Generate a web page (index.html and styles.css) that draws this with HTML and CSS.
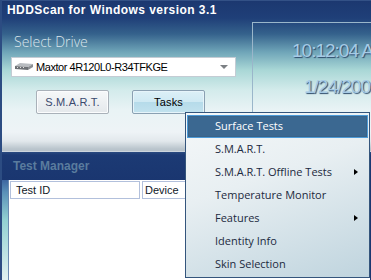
FILE: index.html
```html
<!DOCTYPE html>
<html>
<head>
<meta charset="utf-8">
<link rel="stylesheet" href="styles.css">
</head>
<body>
<div class="app">
  <div class="titlebar">HDDScan for Windows version 3.1</div>
  <div class="top">
    <div class="drive-panel">
      <div class="label">Select Drive</div>
      <div class="combo">
        <svg class="hdd" width="20" height="10" viewBox="0 0 20 10">
          <polygon points="1,4 6,1 19,2 14,5" fill="#b8bcc0"/>
          <polygon points="1,4 14,5 14,8 1,7" fill="#6c7074"/>
          <polygon points="14,5 19,2 19,5 14,8" fill="#8a8e92"/>
          <rect x="3" y="5" width="1" height="1" fill="#e0e0e0"/>
          <rect x="6" y="5" width="1" height="1" fill="#e0e0e0"/>
          <rect x="9" y="5" width="1" height="1" fill="#e0e0e0"/>
        </svg>
        <span class="drive-name">Maxtor 4R120L0-R34TFKGE</span>
        <span class="arrow"></span>
      </div>
      <div class="buttons">
        <div class="btn">S.M.A.R.T.</div>
        <div class="btn hot">Tasks</div>
      </div>
    </div>
    <div class="clock">
      <div class="time">10:12:04 AM</div>
      <div class="date">1/24/2009</div>
    </div>
  </div>
  <div class="manager">
    <div class="mgr-head">Test Manager</div>
    <div class="mgr-body">
      <div class="strip"></div>
      <div class="list">
        <div class="cols">
          <div class="col c1">Test ID</div>
          <div class="col c2">Device</div>
        </div>
      </div>
    </div>
  </div>
  <div class="menu">
    <div class="item active">Surface Tests</div>
    <div class="item">S.M.A.R.T.</div>
    <div class="item sub">S.M.A.R.T. Offline Tests</div>
    <div class="item">Temperature Monitor</div>
    <div class="item sub">Features</div>
    <div class="item">Identity Info</div>
    <div class="item">Skin Selection</div>
  </div>
</div>
</body>
</html>
```

FILE: styles.css
```css
html, body {
  margin: 0;
  padding: 0;
}
body {
  width: 371px;
  height: 280px;
  overflow: hidden;
  background: #1b3670;
  font-family: "Liberation Sans", Arial, sans-serif;
}
.app {
  position: relative;
  width: 371px;
  height: 280px;
  display: flex;
  flex-direction: column;
  background: linear-gradient(to bottom, #4a6a9c 0, #1c3870 1px, #1f3f78 18px, #35628c 34px, #6fa5b8 52px, #a9d7d6 70px, #d3ebeb 90px, #e9f3f5 110px, #eef3f6 132px, #e2e8ec 141px, #b9c4cc 149px, #b9c4cc 151px);
  border-left: 2px solid #2c4c82;
  box-sizing: border-box;
}
.titlebar {
  height: 20px;
  line-height: 21px;
  padding-left: 5px;
  color: #ffffff;
  font-weight: bold;
  font-size: 12px;
  letter-spacing: 0.45px;
}
.top {
  height: 131px;
  display: flex;
}
.drive-panel {
  width: 250px;
  padding-left: 9px;
  box-sizing: border-box;
}
.label {
  margin-top: 13px;
  padding-left: 3px;
  height: 17px;
  line-height: 17px;
  font-size: 14px;
  color: #dbe6ec;
  font-family: "Open Sans", "Liberation Sans", sans-serif;
  font-weight: 300;
}
.combo {
  margin-top: 7px;
  width: 225px;
  height: 20px;
  background: #ffffff;
  border: 1px solid #c4ccd4;
  box-sizing: border-box;
  display: flex;
  align-items: center;
  position: relative;
}
.hdd {
  margin-left: 2px;
  margin-right: 2px;
}
.drive-name {
  font-size: 11px;
  color: #000;
  letter-spacing: -0.45px;
}
.arrow {
  position: absolute;
  right: 7px;
  top: 7px;
  width: 0;
  height: 0;
  border-left: 4px solid transparent;
  border-right: 4px solid transparent;
  border-top: 4px solid #7c8084;
}
.buttons {
  display: flex;
  gap: 23px;
  margin-top: 13px;
  padding-left: 25px;
}
.btn {
  width: 73px;
  height: 24px;
  box-sizing: border-box;
  border: 1px solid #a9b1b9;
  border-radius: 2px;
  box-shadow: inset 0 0 0 1px #fbfcfd;
  background: linear-gradient(to bottom, #f6f8f9, #e4e8eb);
  font-size: 11px;
  color: #3a4a6e;
  display: flex;
  align-items: center;
  justify-content: center;
  letter-spacing: 0.2px;
}
.btn.hot {
  border-color: #8aa0b2;
  box-shadow: inset 0 0 0 1px #e6f4fa;
  background: linear-gradient(to bottom, #dcf0f7 0, #cfe9f3 50%, #b6dbea 52%, #c2e2ee 100%);
  color: #000;
}
.clock {
  flex: 1;
  margin-top: 2px;
  border-top: 1px solid #9ab6ca;
  border-left: 1px solid #9ab6ca;
  padding-left: 39px;
  padding-top: 16px;
  white-space: nowrap;
  overflow: hidden;
  color: #a6cbe6;
  font-size: 19px;
  letter-spacing: -1px;
  line-height: 24px;
  text-shadow: 1px 1px 1px #2c4a6a;
}
.date {
  margin-top: 12px;
  padding-left: 12px;
}
.manager {
  flex: 1;
  display: flex;
  flex-direction: column;
  background: #1b3670;
}
.mgr-head {
  height: 29px;
  box-sizing: border-box;
  border-top: 1px solid #cdd6de;
  background: linear-gradient(to bottom, #2a4a80 0, #1c3a74 3px, #1a3670 100%);
  color: #5a7c9e;
  font-weight: bold;
  font-size: 12px;
  line-height: 28px;
  padding-left: 11px;
}
.mgr-body {
  flex: 1;
  display: flex;
}
.strip {
  width: 6px;
  background: linear-gradient(to bottom, #3d66a0 0, #5a90b8 12px, #92d0d2 40px, #c6e6e6 80px, #e0f0f0 100px);
}
.list {
  width: 360px;
  background: #ffffff;
  border-left: 1px solid #6a8ab0;
  padding-top: 1px;
  padding-left: 1px;
}
.cols {
  display: flex;
  gap: 2px;
}
.col {
  height: 18px;
  box-sizing: border-box;
  border: 1px solid #b2c0dc;
  font-size: 11px;
  line-height: 16px;
  padding-left: 5px;
  color: #101828;
}
.c1 { width: 130px; }
.c2 { width: 60px; padding-left: 2px; }
.menu {
  position: absolute;
  left: 183px;
  top: 112px;
  width: 185px;
  height: 166px;
  box-sizing: border-box;
  border: 1px solid #34557c;
  background: linear-gradient(160deg, #f5f8f9 0, #e8eff2 40%, #bfd4de 100%);
  padding: 2px 1px;
  font-family: "Open Sans", "Noto Sans", sans-serif;
  font-size: 11px;
  color: #1c2a40;
}
.item {
  position: relative;
  height: 23px;
  line-height: 22px;
  padding-left: 28px;
  box-sizing: border-box;
}
.item.active {
  background: #3b6891;
  border: 1px solid #4c9ad8;
  box-shadow: inset 0 0 0 1px #3a6388;
  color: #ffffff;
  line-height: 20px;
  padding-left: 27px;
}
.item.sub::after {
  content: "";
  position: absolute;
  right: 10px;
  top: 8px;
  border-top: 3px solid transparent;
  border-bottom: 3px solid transparent;
  border-left: 4px solid #000;
}
```
